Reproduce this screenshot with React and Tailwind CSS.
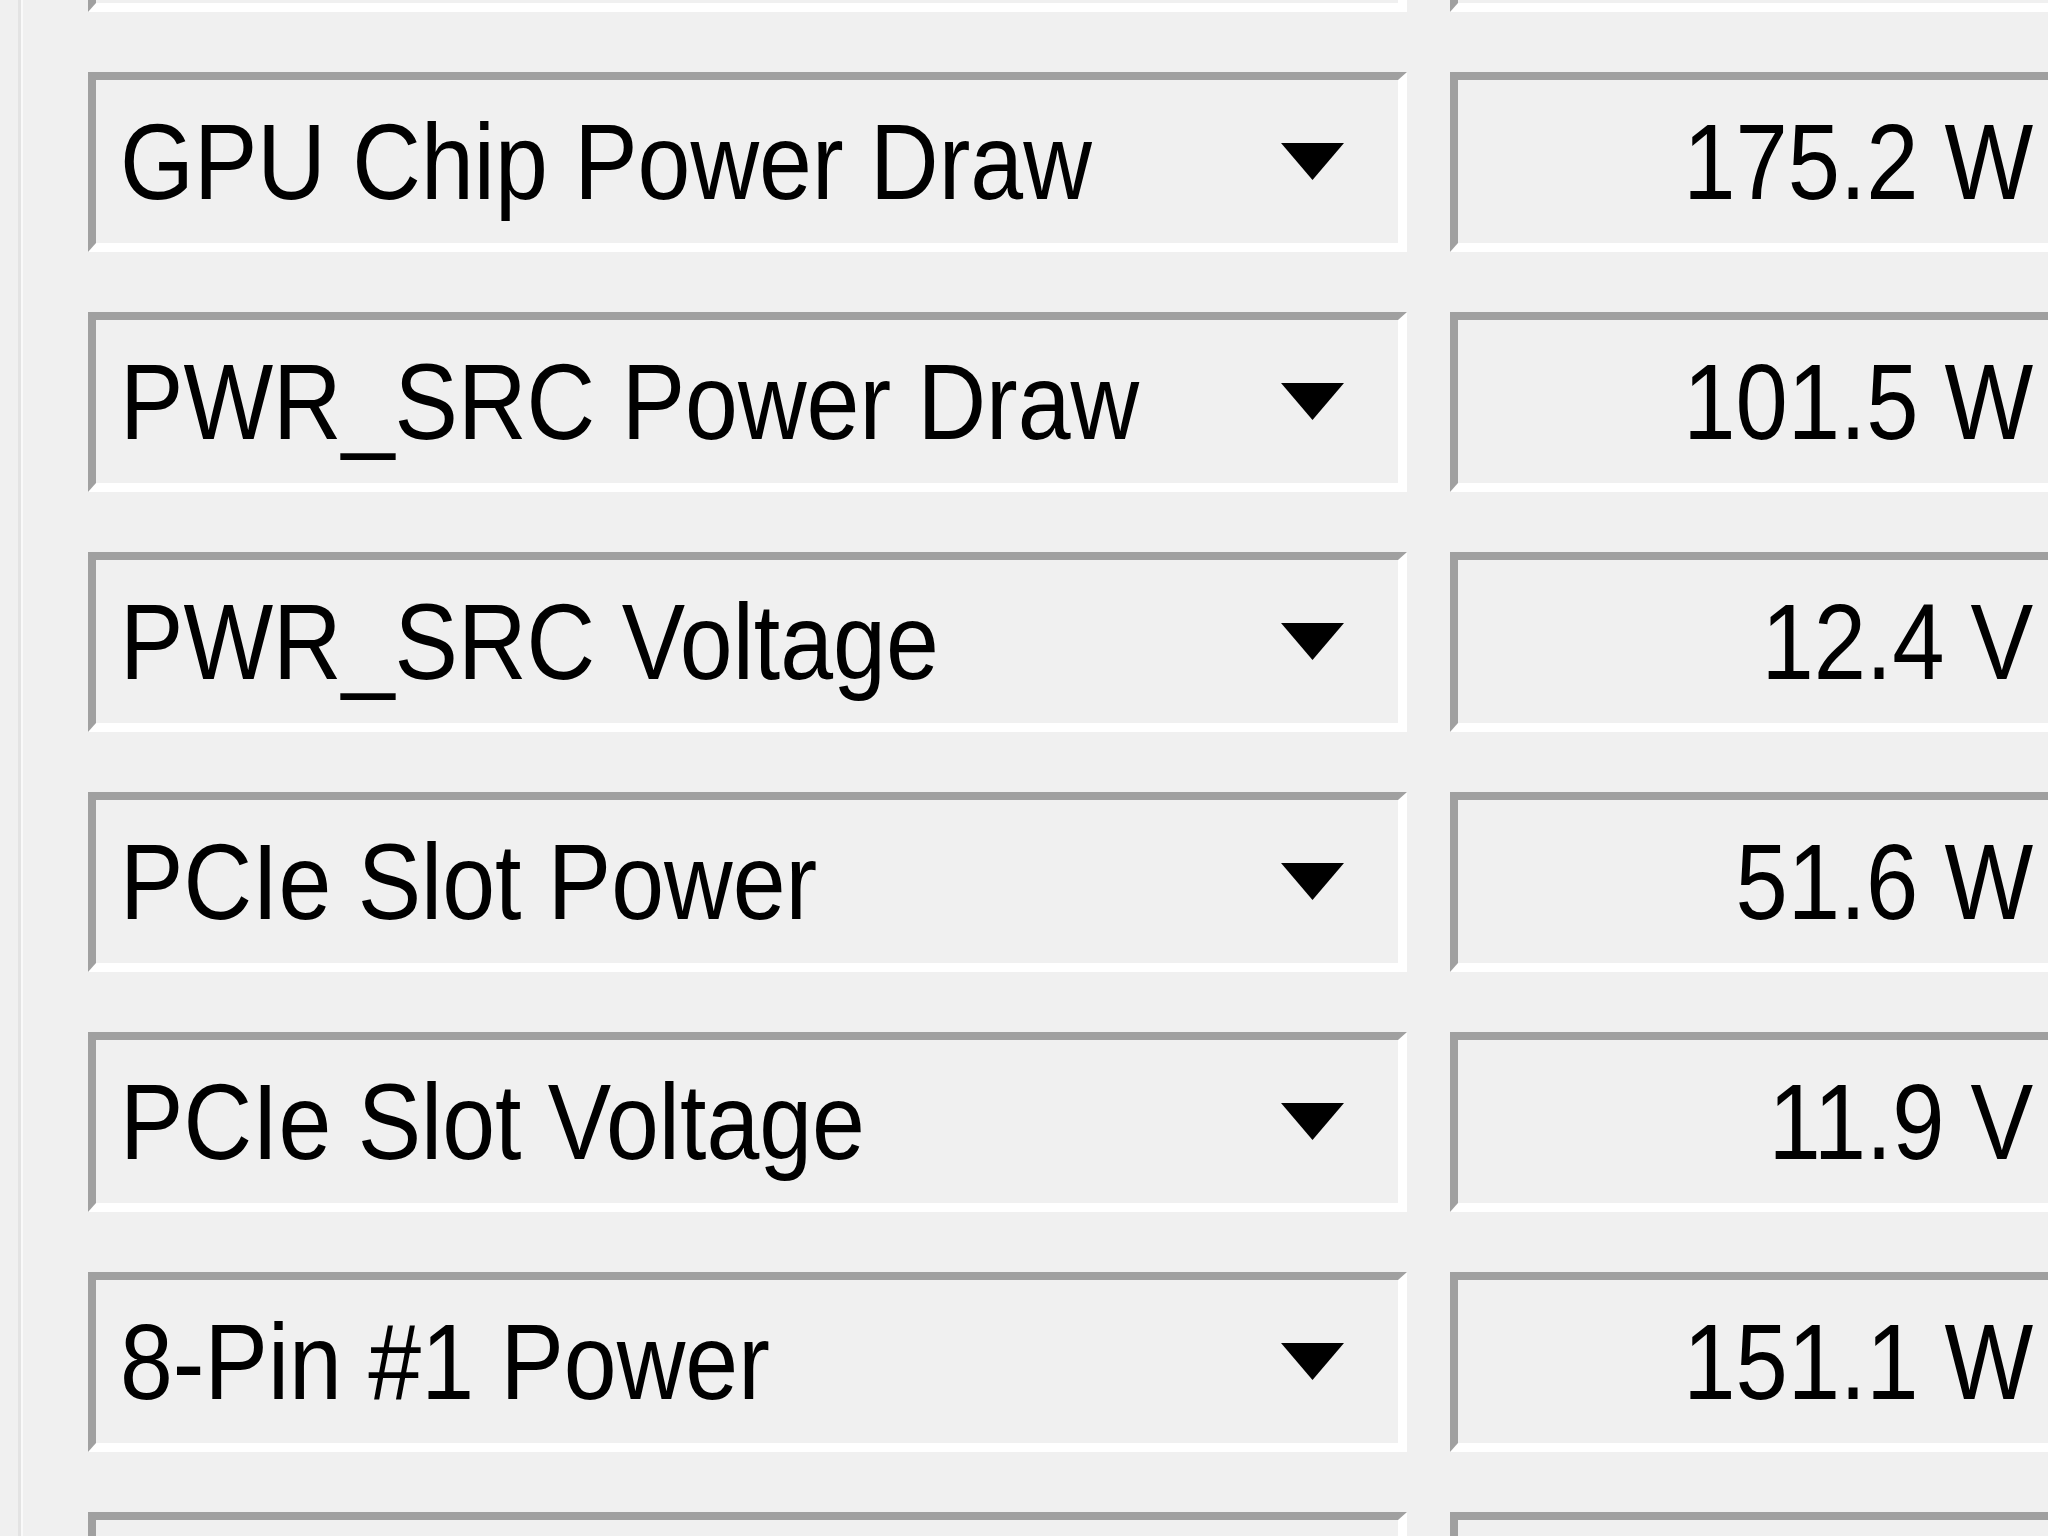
import React from 'react'

// sensor rows; the first and last rows only peek in at the panel edges, so they carry no text
const SENSORS = [
  { id: 'top', label: '', value: '' },
  { id: 'gpu-chip', label: 'GPU Chip Power Draw', value: '175.2 W' },
  { id: 'src-power', label: 'PWR_SRC Power Draw', value: '101.5 W' },
  { id: 'src-volt', label: 'PWR_SRC Voltage', value: '12.4 V' },
  { id: 'pcie-power', label: 'PCIe Slot Power', value: '51.6 W' },
  { id: 'pcie-volt', label: 'PCIe Slot Voltage', value: '11.9 V' },
  { id: 'pin1-power', label: '8-Pin #1 Power', value: '151.1 W' },
  { id: 'bottom', label: '', value: '' },
]

const sunken =
  'h-[180px] border-t-[8px] border-l-[8px] border-b-[9px] border-r-[9px] border-t-[#a0a0a0] border-l-[#a0a0a0] border-b-white border-r-white bg-[#f0f0f0]'

function DropArrow() {
  return (
    <svg width="63" height="37" viewBox="0 0 63 37" className="shrink-0">
      <polygon points="0,0 63,0 31.5,37" fill="#000" />
    </svg>
  )
}

function SensorRow({ label, value }) {
  return (
    <div className="flex h-[180px] items-start gap-[43px]">
      <div className={`${sunken} flex w-[1319px] shrink-0 items-center justify-between pl-[24px] pr-[54px]`}>
        <span className="inline-block origin-left scale-x-[0.88] whitespace-nowrap text-[108px] leading-none text-black">
          {label}
        </span>
        <DropArrow />
      </div>
      <div className={`${sunken} flex w-[640px] shrink-0 items-center justify-end pr-[48px]`}>
        <span className="inline-block origin-right scale-x-[0.87] whitespace-nowrap text-[108px] leading-none text-black">
          {value}
        </span>
      </div>
    </div>
  )
}

export default function App() {
  return (
    <div
      className="flex h-[1536px] w-[2048px] overflow-hidden bg-[#f0f0f0]"
      style={{ fontFamily: '"Liberation Sans", Arial, sans-serif' }}
    >
      <div className="ml-[18px] h-full w-[3px] shrink-0 bg-[#e3e3e3]" />
      <div className="h-full w-[2px] shrink-0 bg-[#f9f9f9]" />
      <div className="ml-[65px] mt-[-168px] flex flex-col gap-[60px]">
        {SENSORS.map((s) => (
          <SensorRow key={s.id} label={s.label} value={s.value} />
        ))}
      </div>
    </div>
  )
}
